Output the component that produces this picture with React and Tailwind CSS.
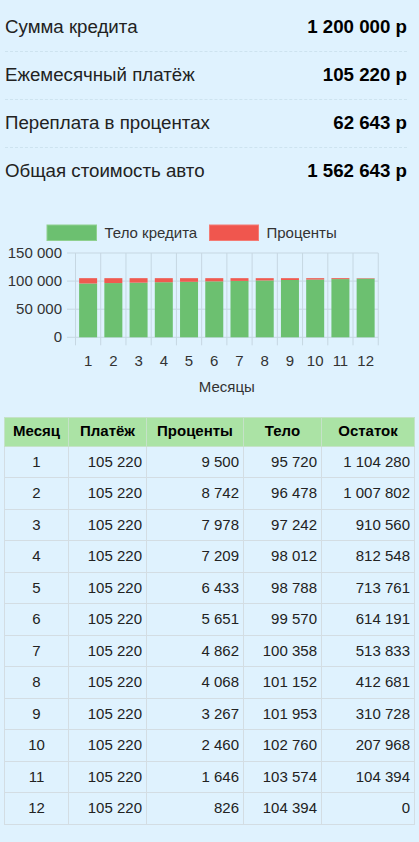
const summary = [
  ["Сумма кредита", "1 200 000 р"],
  ["Ежемесячный платёж", "105 220 р"],
  ["Переплата в процентах", "62 643 р"],
  ["Общая стоимость авто", "1 562 643 р"],
];

const body = [95720, 96478, 97242, 98012, 98788, 99570, 100358, 101152, 101953, 102760, 103574, 104394];
const interest = [9500, 8742, 7978, 7209, 6433, 5651, 4862, 4068, 3267, 2460, 1646, 826];
const rest = [1104280, 1007802, 910560, 812548, 713761, 614191, 513833, 412681, 310728, 207968, 104394, 0];

const fmt = (n) => n.toString().replace(/\B(?=(\d{3})+(?!\d))/g, " ");

// chart geometry (svg coords, svg starts at page y=215)
const TOP = 215;
const zeroY = 338.3 - TOP;
const perUnit = 84.3 / 150000;
const left = 75.5;
const step = 25.23;
const right = left + step * 12;

const Chart = () => {
  const grid = "#c6d7e2";
  return (
    <svg width="419" height="185" className="block" style={{ fontFamily: '"Liberation Sans", Arial, sans-serif' }}>
      {/* legend */}
      <rect x="47" y="11" width="49.5" height="15.5" fill="#6cc070" stroke="#8fd08f" strokeWidth="1" />
      <text x="104.5" y="24" fontSize="15" fill="#333">Тело кредита</text>
      <rect x="209.5" y="11" width="49" height="15.5" fill="#f0564e" stroke="#f47b74" strokeWidth="1" />
      <text x="266.5" y="24" fontSize="15" fill="#333">Проценты</text>

      {/* horizontal grid + y labels */}
      {[0, 50000, 100000, 150000].map((v) => {
        const y = zeroY - v * perUnit;
        return (
          <g key={v}>
            <line x1="67" x2={right} y1={y} y2={y} stroke={grid} strokeWidth="1" />
            <text x="62" y={y + 5} fontSize="15" fill="#333" textAnchor="end">
              {fmt(v)}
            </text>
          </g>
        );
      })}

      {/* vertical grid */}
      {Array.from({ length: 13 }).map((_, i) => {
        const x = left + i * step;
        return <line key={i} x1={x} x2={x} y1={zeroY - 84.3} y2={zeroY + 8} stroke={grid} strokeWidth="1" />;
      })}

      {/* bars */}
      {body.map((b, i) => {
        const cx = left + step * i + step / 2;
        const hb = b * perUnit;
        const hi = interest[i] * perUnit;
        return (
          <g key={i}>
            <rect x={cx - 9} y={zeroY - hb} width="18" height={hb} fill="#6cc070" />
            <rect x={cx - 9} y={zeroY - hb - hi} width="18" height={hi} fill="#ef5a50" />
            <text x={cx} y={zeroY + 29} fontSize="15" fill="#333" textAnchor="middle">
              {i + 1}
            </text>
          </g>
        );
      })}

      <text x={(left + right) / 2} y="178" fontSize="15" fill="#333" textAnchor="middle">
        Месяцы
      </text>
    </svg>
  );
};

const App = () => {
  return (
    <div
      className="min-h-[842px] w-[419px] bg-[#dff2fe] text-[#222]"
      style={{ fontFamily: '"Liberation Sans", Arial, sans-serif' }}
    >
      <div className="pt-[3.5px] pl-[5px] pr-[12px]">
        {summary.map(([label, value], i) => (
          <div
            key={label}
            className={
              "flex h-[48px] items-center justify-between text-[18.7px] " +
              (i < summary.length - 1 ? "border-b border-dashed border-[#cde3ef]" : "")
            }
          >
            <span>{label}</span>
            <span className="font-bold text-black">{value}</span>
          </div>
        ))}
      </div>

      <div className="mt-[18px]">
        <Chart />
      </div>

      <div className="mt-[18px] px-[4px]">
        <table className="w-[410px] table-fixed border-collapse text-[15px]">
          <colgroup>
            <col className="w-[64px]" />
            <col className="w-[78px]" />
            <col className="w-[97px]" />
            <col className="w-[78px]" />
            <col className="w-[93px]" />
          </colgroup>
          <thead>
            <tr className="h-[29px] bg-[#abe3a5] text-black">
              {["Месяц", "Платёж", "Проценты", "Тело", "Остаток"].map((h) => (
                <th key={h} className="border border-[#c5e2c8] px-1 text-center font-bold">
                  {h}
                </th>
              ))}
            </tr>
          </thead>
          <tbody className="text-[#222]">
            {body.map((b, i) => (
              <tr key={i} className="h-[31.5px]">
                <td className="border border-[#d3dde3] text-center">{i + 1}</td>
                <td className="border border-[#d3dde3] pr-[4px] text-right">{fmt(105220)}</td>
                <td className="border border-[#d3dde3] pr-[4px] text-right">{fmt(interest[i])}</td>
                <td className="border border-[#d3dde3] pr-[4px] text-right">{fmt(b)}</td>
                <td className="border border-[#d3dde3] pr-[4px] text-right">{fmt(rest[i])}</td>
              </tr>
            ))}
          </tbody>
        </table>
      </div>
    </div>
  );
};

export default App;
